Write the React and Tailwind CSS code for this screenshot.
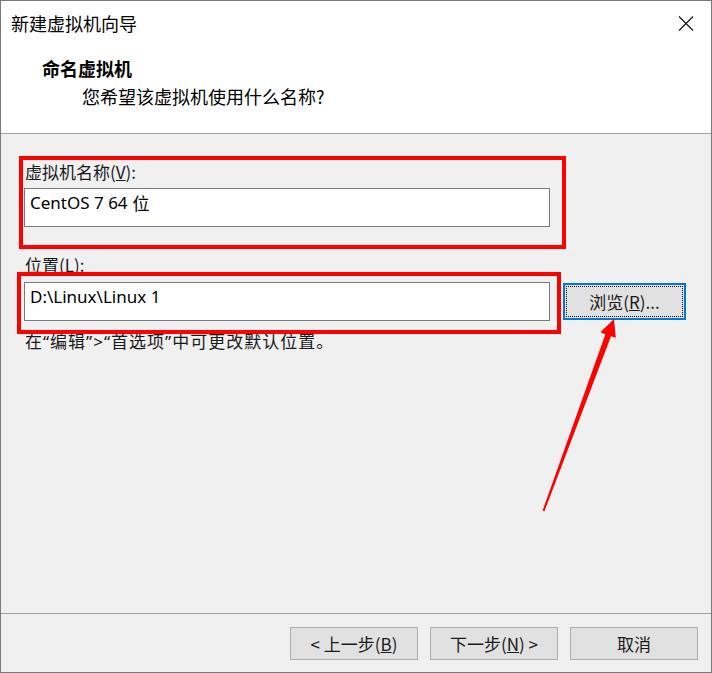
import React from "react";

const cjk = { fontFamily: '"Noto Sans CJK SC", "Noto Sans", sans-serif' };
const latin = { fontFamily: '"Noto Sans", "Noto Sans CJK SC", sans-serif' };

function Btn({ children, className = "" }) {
  return (
    <div
      className={`w-[128px] h-[33px] flex items-center justify-center bg-[#e1e1e1] border border-[#adadad] text-[17px] text-[#1a1a1a] ${className}`}
      style={cjk}
    >
      {children}
    </div>
  );
}

export default function App() {
  return (
    <div className="relative w-[712px] h-[673px] bg-[#f0f0f0] border border-[#7a7a7a] flex flex-col overflow-hidden">
      {/* header */}
      <div className="h-[133px] bg-white border-b border-[#a0a0a0] flex flex-col shrink-0">
        <div className="h-[44px] flex items-center justify-between pl-[10px] pr-[17px]">
          <span className="text-[18px] leading-6 text-black" style={cjk}>新建虚拟机向导</span>
          <svg width="16" height="15" viewBox="0 0 16 15">
            <path d="M1 0.5 L15 14.5 M15 0.5 L1 14.5" stroke="#111" strokeWidth="1.1" fill="none" />
          </svg>
        </div>
        <div className="mt-[11px] pl-[41px] text-[18px] leading-6 font-bold text-black" style={cjk}>命名虚拟机</div>
        <div className="mt-[4px] pl-[81px] text-[18px] leading-6 text-black" style={cjk}>您希望该虚拟机使用什么名称?</div>
      </div>

      {/* body */}
      <div className="h-[480px] border-b border-[#a0a0a0] flex flex-col pl-[23px] pt-[28px] shrink-0">
        <div className="ml-[1px] text-[17px] leading-5 text-[#1a1a1a]" style={cjk}>
          虚拟机名称(<span className="underline">V</span>):
        </div>
        <div className="mt-[6px] w-[526px] h-[39px] bg-white border border-[#7a7a7a] flex items-center pl-[5px] pb-[9px] text-[17px] text-black" style={latin}>
          CentOS 7 64 <span style={cjk} className="ml-[5px]">位</span>
        </div>
        <div className="mt-[28px] ml-[1px] text-[17px] leading-5 text-[#1a1a1a]" style={cjk}>
          位置(<span className="underline">L</span>):
        </div>
        <div className="mt-[7px] flex items-start">
          <div className="w-[526px] h-[39px] bg-white border border-[#7a7a7a] flex items-center pl-[5px] pb-[9px] text-[17px] text-black" style={latin}>
            D:\Linux\Linux 1
          </div>
          <div className="ml-[13px] mt-[1px] w-[123px] h-[37px] bg-[#e1e1e1] border-2 border-[#0078d7] p-[1px]">
            <div className="w-full h-full border border-dotted border-black flex items-center justify-center text-[17px] text-[#1a1a1a]" style={cjk}>
              浏览(<span className="underline">R</span>)...
            </div>
          </div>
        </div>
        <div className="mt-[11px] ml-[1px] text-[17px] leading-5 tracking-[1px] text-[#1a1a1a]" style={latin}>
          在“编辑”&gt;“首选项”中可更改默认位置。
        </div>
      </div>

      {/* footer */}
      <div className="flex-1 flex justify-end items-start pt-[13px] pr-[13px] gap-[12px]">
        <Btn>&lt; 上一步(<span className="underline">B</span>)</Btn>
        <Btn>下一步(<span className="underline">N</span>) &gt;</Btn>
        <Btn>取消</Btn>
      </div>

      {/* annotations */}
      <div className="absolute left-[18px] top-[155px] w-[547px] h-[93px] border-4 border-[#ff0000] pointer-events-none" />
      <div className="absolute left-[16px] top-[271px] w-[544px] h-[62px] border-4 border-[#ff0000] pointer-events-none" />
      <svg className="absolute left-0 top-0 pointer-events-none" width="712" height="673" viewBox="-1 -1 712 673">
        <polygon
          points="540.6,508.6 603.4,332.2 598.4,330.3 612,317 613.8,335.8 609,334.2 542.4,509.4"
          fill="#ff0000"
        />
      </svg>
    </div>
  );
}
